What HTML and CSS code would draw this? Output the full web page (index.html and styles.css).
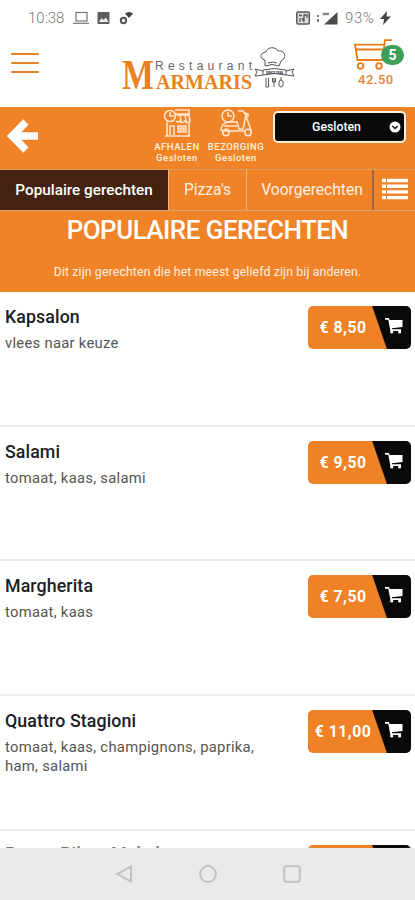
FILE: index.html
```html
<!DOCTYPE html>
<html lang="nl">
<head>
<meta charset="utf-8">
<title>Restaurant Marmaris</title>
<link rel="stylesheet" href="styles.css">
</head>
<body>
<svg class="defs" width="0" height="0">
  <symbol id="cart" viewBox="0 0 18 16"><path d="M0 0H4L4.6 2H17.5V9L6.8 10.2 7 11.3H16V13H5.4L3.3 1.7H0Z"/><circle cx="6.7" cy="14" r="1.6"/><circle cx="14.6" cy="14" r="1.6"/></symbol>
</svg>
<div class="status">
  <span class="time">10:38</span>
  <svg class="left-icons" width="60" height="16" viewBox="0 0 60 16">
    <g fill="none" stroke="#777" stroke-width="1.2"><rect x="3" y="2.5" width="11" height="8.5"/><path d="M0 13.3H16"/></g>
    <rect x="24.5" y="2" width="12" height="12" rx="1" fill="#5c5c5c"/><path d="M26 12l2.5-4 2 2 2.500-2.500 2.500 4.500z" fill="#eee"/>
    <circle cx="50.5" cy="10.5" r="2.7" fill="none" stroke="#555" stroke-width="2"/><path d="M52 3.500q4-3 8 0l-4 4.500z" fill="#444"/>
  </svg>
  <svg class="right-icons" width="44" height="16" viewBox="0 0 44 16">
    <rect x=".8" y="2" width="12.5" height="12" rx="1.5" fill="#ddd" stroke="#555" stroke-width="1.5"/><path d="M3 5.500h3M4 8v4M6 8l2 4V5h3v3" fill="none" stroke="#555" stroke-width="1.3"/>
    <path d="M22 5v2M22 9v3" stroke="#777" stroke-width="2"/><path d="M26.500 4h6.500" stroke="#888" stroke-width="2.500"/><path d="M41.500 2v12.500H28z" fill="#4b4b4b"/>
  </svg>
  <span class="battery">93%</span>
  <svg width="11" height="16" viewBox="0 0 11 16"><path d="M7 1L0 9h4.200L3 15l8-8.500H6.500z" fill="#444"/></svg>
</div>
<header class="header">
  <div class="burger"><i></i><i></i><i></i></div>
  <svg class="logo" width="180" height="50" viewBox="0 0 180 50">
    <text class="logo-m" x="2" y="44.500" textLength="32" lengthAdjust="spacingAndGlyphs">M</text>
    <text class="logo-rest" x="35" y="25.500" textLength="97">Restaurant</text>
    <text class="logo-name" x="36" y="44.500" textLength="96" lengthAdjust="spacing">ARMARIS</text>
    <g fill="none" stroke="#555" stroke-width="1">
      <path d="M145 22v-6c-6-1-5-8 1-8 1-5 9-6 12-1 6-2 10 7 3 10l-2 5q-7-3-14 0M148 19q5-2 9 0"/>
      <path d="M143 26q11-3 23 0v5q-12-3-23 0zM143 27l-8-2 2 3-2 4 8-1M166 27l8-2-2 3 2 4-8-1"/>
      <path d="M146 34v9h2.500V34M154 34v9M152.500 34v4h3v-4M161 33v3"/><ellipse cx="161" cy="39.500" rx="2.200" ry="3.500"/>
    </g>
    <text class="logo-since" x="146" y="29.500" textLength="17">SINCE 1984</text>
  </svg>
  <div class="basket">
    <svg width="42" height="33" viewBox="0 0 42 33" fill="none" stroke="#e97c17" stroke-width="1.800"><path d="M39 2.200H32L29.500 22H4.500L2 6.700H31M3 11.500H30"/><circle cx="7.500" cy="28" r="2.800"/><circle cx="26" cy="28" r="2.800"/></svg>
    <span class="badge">5</span>
    <span class="total">42.50</span>
  </div>
</header>
<section class="bar">
  <svg class="back" width="32" height="34" viewBox="0 0 32 34"><path d="M19 3L5 17l14 14M7 17H31" fill="none" stroke="#fff" stroke-width="7.500"/></svg>
  <div class="mode pickup">
    <svg width="28" height="28" viewBox="0 0 28 28" fill="none" stroke="#ffe6ce" stroke-width="1.600"><path d="M12 1h14v4H12M4 13v14h22V13M2 27h25M14 6h12l1 6q-3 3-5 0-3 3-5 0-2 2-4 0M17 5l1 7M22 5l1 7M7 26V17h4v9M15 17h8v6h-8zM17 19h4v2h-4z"/><circle cx="7" cy="7" r="5.500"/><path d="M7 3v4h4"/></svg>
    <b>AFHALEN</b><span>Gesloten</span>
  </div>
  <div class="mode delivery">
    <svg width="34" height="28" viewBox="0 0 34 28" fill="none" stroke="#ffe6ce" stroke-width="1.600"><circle cx="9" cy="7" r="6"/><path d="M9 3v4h4M2 22q0-8 8-9h8l2 7h4L27 6 24 2h-5M27 7l5 14M3 22h22M5 17h13M26 4l3 1v3"/><circle cx="7" cy="23.500" r="3.200"/><circle cx="29" cy="23.500" r="3.200"/></svg>
    <b>BEZORGING</b><span>Gesloten</span>
  </div>
  <div class="select"><span>Gesloten</span><svg width="12" height="12" viewBox="0 0 12 12"><circle cx="6" cy="6" r="5.500" fill="#fff"/><path d="M3.300 5L6 7.500 8.700 5" fill="none" stroke="#111" stroke-width="1.500"/></svg></div>
</section>
<nav class="tabs">
  <div class="tab active">Populaire gerechten</div>
  <div class="tab pizza">Pizza's</div>
  <div class="tab starter">Voorgerechten</div>
  <div class="list"><svg width="26" height="22" viewBox="0 0 26 22"><path d="M0 2.500H4M5 2.500H26M0 8.200H4M5 8.200H26M0 13.900H4M5 13.900H26M0 19.600H4M5 19.600H26" stroke="#fff" stroke-width="3.400"/></svg></div>
</nav>
<section class="intro">
  <h1>POPULAIRE GERECHTEN</h1>
  <p>Dit zijn gerechten die het meest geliefd zijn bij anderen.</p>
</section>
<main class="menu">
  <article class="item"><div class="info"><h2>Kapsalon</h2><p>vlees naar keuze</p></div><div class="price"><span>€ 8,50</span><svg width="18" height="16"><use href="#cart"/></svg></div></article>
  <article class="item"><div class="info"><h2>Salami</h2><p>tomaat, kaas, salami</p></div><div class="price"><span>€ 9,50</span><svg width="18" height="16"><use href="#cart"/></svg></div></article>
  <article class="item"><div class="info"><h2>Margherita</h2><p>tomaat, kaas</p></div><div class="price"><span>€ 7,50</span><svg width="18" height="16"><use href="#cart"/></svg></div></article>
  <article class="item"><div class="info"><h2>Quattro Stagioni</h2><p>tomaat, kaas, champignons, paprika, ham, salami</p></div><div class="price"><span>€ 11,00</span><svg width="18" height="16"><use href="#cart"/></svg></div></article>
  <article class="item"><div class="info"><h2>Penne Pilaar Makel</h2></div><div class="price"></div></article>
</main>
<footer class="navbar">
  <svg width="18" height="18" viewBox="0 0 18 18"><path d="M16 1.500V16.500L2 9z"/></svg>
  <svg width="18" height="18" viewBox="0 0 18 18"><circle cx="9" cy="9" r="7.900"/></svg>
  <svg width="18" height="18" viewBox="0 0 18 18"><rect x="1.200" y="1.200" width="15.600" height="15.600" rx="2"/></svg>
</footer>
</body>
</html>
```
FILE: styles.css
```css
* { box-sizing: border-box; }
body { margin: 0; width: 415px; height: 900px; overflow: hidden; display: flex; flex-direction: column; background: #fff; font-family: Roboto, "Liberation Sans", sans-serif; }
.defs { display: block; position: absolute; }
h1, h2, p { margin: 0; }
svg { flex: none; }
.status { height: 36px; flex: none; display: flex; align-items: center; padding: 0 23px 0 28px; color: #777; font-size: 15px; font-weight: 300; }
.time { width: 45px; }
.left-icons { margin-right: 163px; }
.battery { margin: 0 4px 0 5px; width: 31px; letter-spacing: .6px; }
.header { height: 71px; flex: none; display: flex; padding: 0 10px 0 11px; }
.burger { width: 28px; margin-top: 17px; display: flex; flex-direction: column; gap: 7px; }
.burger i { height: 2px; background: #e28425; border-radius: 1px; }
.logo { margin: 8px 0 0 81px; overflow: visible; }
.logo-m, .logo-name { font-family: "Liberation Serif", serif; font-weight: 700; fill: #e9821f; }
.logo-m { font-size: 42px; }
.logo-name { font-size: 20px; }
.logo-rest { font-family: "Liberation Sans", sans-serif; font-size: 12px; fill: #666; }
.logo-since { font-size: 3.5px; font-weight: 700; fill: #333; }
.basket { position: relative; width: 52px; margin: 2px 0 0 53px; display: flex; flex-direction: column; }
.badge { position: absolute; left: 28px; top: 7px; width: 23px; height: 20px; border-radius: 10px; background: #3d9e57; color: #fff; font-weight: 700; font-size: 14px; line-height: 20px; text-align: center; }
.total { color: #e68730; font-weight: 500; font-size: 13px; line-height: 15px; margin: 1px 0 0 5px; letter-spacing: .5px; }
.bar { height: 62px; flex: none; background: #f08328; display: flex; padding: 0 8px 0 7px; }
.back { margin-top: 12px; }
.mode { display: flex; flex-direction: column; align-items: center; color: #fff0df; font-size: 9.5px; line-height: 11px; font-weight: 500; letter-spacing: .5px; padding-top: 2px; }
.mode svg { margin-bottom: 4px; }
.mode b { font-weight: 500; white-space: nowrap; }
.pickup { width: 52px; margin-left: 112px; }
.delivery { width: 60px; margin-left: 3px; }
.select { width: 133px; height: 32px; margin: 4px 0 0 7px; background: #090909; border: 2px solid #fff1df; border-radius: 5px; display: flex; align-items: center; color: #fff; font-weight: 500; font-size: 12.3px; padding-right: 3px; }
.select span { flex: 1; padding-left: 9px; text-align: center; }
.tabs { height: 42px; flex: none; display: flex; background: #f08328; color: #fff0e0; font-size: 15.6px; border-top: 1px solid #d59a62; border-bottom: 1px solid #d8a674; line-height: 41px; }
.tab { text-align: center; white-space: nowrap; border-right: 1px solid #eeb783; }
.active { width: 169px; background: #432310; color: #fff; font-weight: 500; font-size: 15.3px; }
.pizza { width: 78px; }
.starter { width: 127px; border-right: 2px solid #9b6843; padding-left: 5px; }
.list { flex: 1; display: flex; align-items: center; justify-content: center; padding-bottom: 3px; }
.intro { height: 81px; flex: none; background: #f08328; color: #fff; text-align: center; }
.intro h1 { font-size: 26px; line-height: 32px; font-weight: 500; letter-spacing: -.55px; padding-top: 3px; }
.intro p { font-size: 12.3px; line-height: 16px; margin-top: 18px; color: #fff0e0; letter-spacing: .13px; }
.menu { flex: 1; overflow: hidden; min-height: 0; }
.item { height: 134.7px; border-bottom: 2px solid #ececec; display: flex; justify-content: space-between; padding: 14px 4px 0 5px; }
.info { width: 270px; }
.info h2 { font-size: 17.8px; line-height: 22px; font-weight: 500; color: #1b2023; letter-spacing: .1px; }
.item:last-child h2 { margin-top: -2px; color: #777; }
.info p { font-size: 14.8px; line-height: 19px; margin-top: 6px; color: #555; letter-spacing: .28px; }
.price { width: 103px; height: 43px; border-radius: 5px; background: linear-gradient(71deg, #ef8127 66.5%, #090909 67.5%); display: flex; align-items: center; color: #fff; }
.price span { width: 70px; text-align: center; white-space: nowrap; font-size: 15.8px; font-weight: 700; letter-spacing: .5px; }
.price svg { fill: #fff; margin: 0 0 3px 7px; }
.navbar { height: 52px; flex: none; background: #eaeaea; display: flex; justify-content: center; gap: 66px; align-items: center; }
.navbar svg { fill: none; stroke: #c2c2c2; stroke-width: 2; }
```
